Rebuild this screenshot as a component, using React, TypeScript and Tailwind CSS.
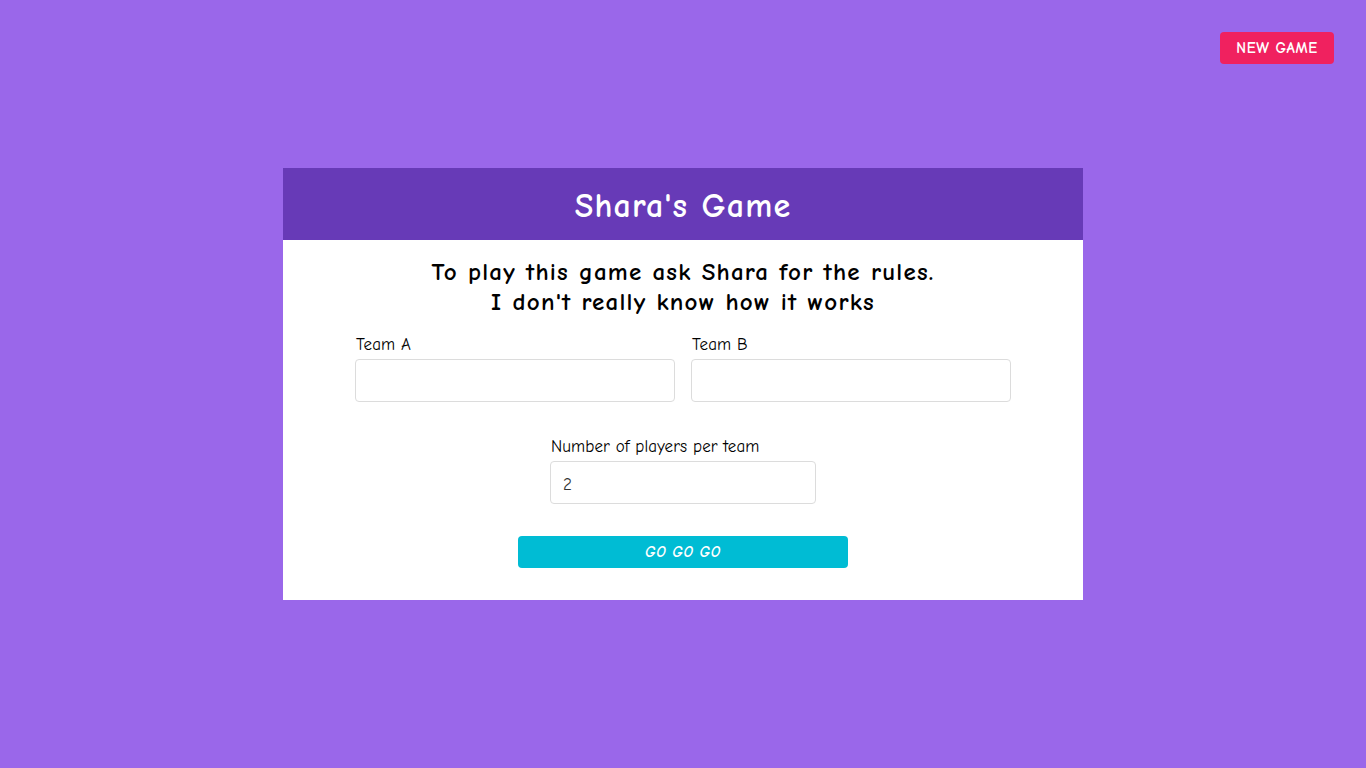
import React, { useState } from 'react'

const FONT = "font-['Comic_Sans_MS','Comic_Neue','DejaVu_Sans',sans-serif]"

function Field({
  label,
  value,
  onChange,
  className = '',
}: {
  label: string
  value: string
  onChange: (v: string) => void
  className?: string
}) {
  return (
    <label className={`flex flex-col ${className}`}>
      <span className="mb-1 pl-px text-[17px] leading-[20px] tracking-[0.1px] text-black">{label}</span>
      <input
        value={value}
        onChange={(e) => onChange(e.target.value)}
        className="h-[43px] w-full rounded-[4px] border border-[#dcdcdc] bg-white px-3 pt-[3px] text-[17px] text-[#333] outline-none"
      />
    </label>
  )
}

export default function App() {
  const [teamA, setTeamA] = useState('')
  const [teamB, setTeamB] = useState('')
  const [players, setPlayers] = useState('2')

  return (
    <div className={`min-h-screen bg-[#9a67ea] ${FONT}`}>
      <div className="flex justify-end pt-8 pr-8">
        <button
          type="button"
          className="h-8 w-[114px] rounded-[4px] bg-[#f0215f] text-[15px] font-bold tracking-[0.6px] text-white"
        >
          NEW GAME
        </button>
      </div>

      <div className="mx-auto mt-[104px] w-[800px] bg-white">
        <div className="flex h-[72px] items-center justify-center bg-[#673ab7] pt-1">
          <h1 className="text-[34px] leading-none font-bold tracking-[1.2px] text-white">Shara's Game</h1>
        </div>

        <div className="px-[72px] pt-[17px] pb-8">
          <p className="text-center text-[25px] leading-[30px] font-bold tracking-[1.2px] text-black">
            To play this game ask Shara for the rules.
            <br />
            I don't really know how it works
          </p>

          <div className="mt-[18px] grid grid-cols-2 gap-4">
            <Field label="Team A" value={teamA} onChange={setTeamA} />
            <Field label="Team B" value={teamB} onChange={setTeamB} />
          </div>

          <div className="mt-[35px] flex justify-center">
            <Field
              label="Number of players per team"
              value={players}
              onChange={setPlayers}
              className="w-[266px]"
            />
          </div>

          <div className="mt-8 flex justify-center">
            <button
              type="button"
              className="h-8 w-[330px] rounded-[4px] bg-[#00bcd4] text-[15px] font-bold italic tracking-[0.6px] text-white"
            >
              GO GO GO
            </button>
          </div>
        </div>
      </div>
    </div>
  )
}
